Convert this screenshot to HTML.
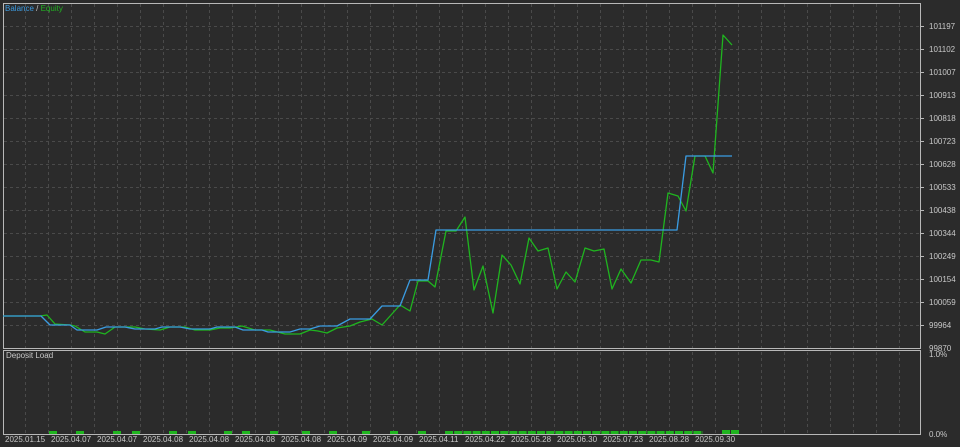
<!DOCTYPE html>
<html><head><meta charset="utf-8"><style>
body{margin:0;background:#2b2b2b;width:960px;height:447px;overflow:hidden;font-family:"Liberation Sans",sans-serif}
svg{display:block}
text{font-family:"Liberation Sans",sans-serif;font-size:8px;fill:#c8c8c8}
</style></head><body>
<svg width="960" height="447" viewBox="0 0 960 447">
<rect width="960" height="447" fill="#2b2b2b"/>
<g stroke="#4a4a4a" stroke-width="1" stroke-dasharray="3,3">
<path d="M25.5 4V348M48.5 4V348M71.5 4V348M94.5 4V348M117.5 4V348M140.5 4V348M163.5 4V348M186.5 4V348M209.5 4V348M232.5 4V348M255.5 4V348M278.5 4V348M301.5 4V348M324.5 4V348M347.5 4V348M370.5 4V348M393.5 4V348M416.5 4V348M439.5 4V348M462.5 4V348M485.5 4V348M508.5 4V348M531.5 4V348M554.5 4V348M577.5 4V348M600.5 4V348M623.5 4V348M646.5 4V348M669.5 4V348M692.5 4V348M715.5 4V348M738.5 4V348M761.5 4V348M784.5 4V348M807.5 4V348M830.5 4V348M853.5 4V348M876.5 4V348M899.5 4V348"/>
<path d="M25.5 352V434M48.5 352V434M71.5 352V434M94.5 352V434M117.5 352V434M140.5 352V434M163.5 352V434M186.5 352V434M209.5 352V434M232.5 352V434M255.5 352V434M278.5 352V434M301.5 352V434M324.5 352V434M347.5 352V434M370.5 352V434M393.5 352V434M416.5 352V434M439.5 352V434M462.5 352V434M485.5 352V434M508.5 352V434M531.5 352V434M554.5 352V434M577.5 352V434M600.5 352V434M623.5 352V434M646.5 352V434M669.5 352V434M692.5 352V434M715.5 352V434M738.5 352V434M761.5 352V434M784.5 352V434M807.5 352V434M830.5 352V434M853.5 352V434M876.5 352V434M899.5 352V434"/>
<path d="M4 26.5H920M4 49.5H920M4 72.5H920M4 95.5H920M4 118.5H920M4 141.5H920M4 164.5H920M4 187.5H920M4 210.5H920M4 233.5H920M4 256.5H920M4 279.5H920M4 302.5H920M4 325.5H920"/>
</g>
<g fill="none" stroke="#b8b8b8" stroke-width="1">
<rect x="3.5" y="3.5" width="917" height="345"/>
<rect x="3.5" y="350.5" width="917" height="84"/>
</g>
<g stroke="#b8b8b8">
<path d="M921 26.5h3M921 49.5h3M921 72.5h3M921 95.5h3M921 118.5h3M921 141.5h3M921 164.5h3M921 187.5h3M921 210.5h3M921 233.5h3M921 256.5h3M921 279.5h3M921 302.5h3M921 325.5h3"/>
</g>
<g>
<text x="929" y="29">101197</text><text x="929" y="52">101102</text><text x="929" y="75">101007</text><text x="929" y="98">100913</text><text x="929" y="121">100818</text><text x="929" y="144">100723</text><text x="929" y="167">100628</text><text x="929" y="190">100533</text><text x="929" y="213">100438</text><text x="929" y="236">100344</text><text x="929" y="259">100249</text><text x="929" y="282">100154</text><text x="929" y="305">100059</text><text x="929" y="328">99964</text><text x="929" y="351">99870</text>
<text x="929" y="357">1.0%</text><text x="929" y="437">0.0%</text>
</g>
<text x="5" y="11"><tspan style="fill:#3d9be0">Balance</tspan> / <tspan style="fill:#22b022">Equity</tspan></text>
<text x="6" y="358">Deposit Load</text>
<g>
<text x="5" y="442">2025.01.15</text><text x="51" y="442">2025.04.07</text><text x="97" y="442">2025.04.07</text><text x="143" y="442">2025.04.08</text><text x="189" y="442">2025.04.08</text><text x="235" y="442">2025.04.08</text><text x="281" y="442">2025.04.08</text><text x="327" y="442">2025.04.09</text><text x="373" y="442">2025.04.09</text><text x="419" y="442">2025.04.11</text><text x="465" y="442">2025.04.22</text><text x="511" y="442">2025.05.28</text><text x="557" y="442">2025.06.30</text><text x="603" y="442">2025.07.23</text><text x="649" y="442">2025.08.28</text><text x="695" y="442">2025.09.30</text>
</g>
<polyline fill="none" stroke="#1fb51f" stroke-width="1.3" stroke-linejoin="round" points="3,316 40,316 47,315 55,324 70,325 75,326 85,332 97,332 105,334 115,327 135,327 145,329 160,330 170,327 185,327 195,330 210,330 220,328 230,328 242,326 255,330 270,330 285,334 300,334 310,330 318,331 327,333 337,328 350,326 360,322 372,319 382,325 400,305 410,311 418,281 428,281 435,287 446,231 456,231 465,217 474,290 483,266 493,313 502,255 511,265 520,284 529,238 538,251 548,248 557,289 566,272 575,282 585,248 594,251 604,249 612,289 621,269 631,283 641,260 651,260 659,262 668,193 678,196 686,211 695,156 705,156 713,173 723,35 732,45"/>
<polyline fill="none" stroke="#3a9ce2" stroke-width="1.3" stroke-linejoin="round" points="3,316 41,316 50,325 70,325 77,330 97,330 106,327 125,327 135,329 155,329 162,327 180,327 190,329 210,329 217,327 235,327 243,330 262,330 268,332 290,332 300,329 310,329 320,326 337,326 350,319 370,319 382,306 400,306 410,280 428,280 436,230 677,230 686,156 732,156"/>
<g fill="#1fb51f">
<rect x="49" y="431" width="8" height="3"/><rect x="76" y="431" width="8" height="3"/><rect x="113" y="431" width="8" height="3"/><rect x="132" y="431" width="8" height="3"/><rect x="169" y="431" width="8" height="3"/><rect x="188" y="431" width="8" height="3"/><rect x="224" y="431" width="8" height="3"/><rect x="242" y="431" width="8" height="3"/><rect x="270" y="431" width="8" height="3"/><rect x="302" y="431" width="8" height="3"/><rect x="329" y="431" width="8" height="3"/><rect x="362" y="431" width="8" height="3"/><rect x="390" y="431" width="8" height="3"/>
<rect x="418" y="431" width="8" height="3"/>
</g>
<path d="M445 432.5H703" stroke="#1fb51f" stroke-width="3" stroke-dasharray="8,1.2"/>
<rect x="722" y="430" width="8" height="4" fill="#1fb51f"/><rect x="731" y="430" width="8" height="4" fill="#1fb51f"/>
</svg>
</body></html>
